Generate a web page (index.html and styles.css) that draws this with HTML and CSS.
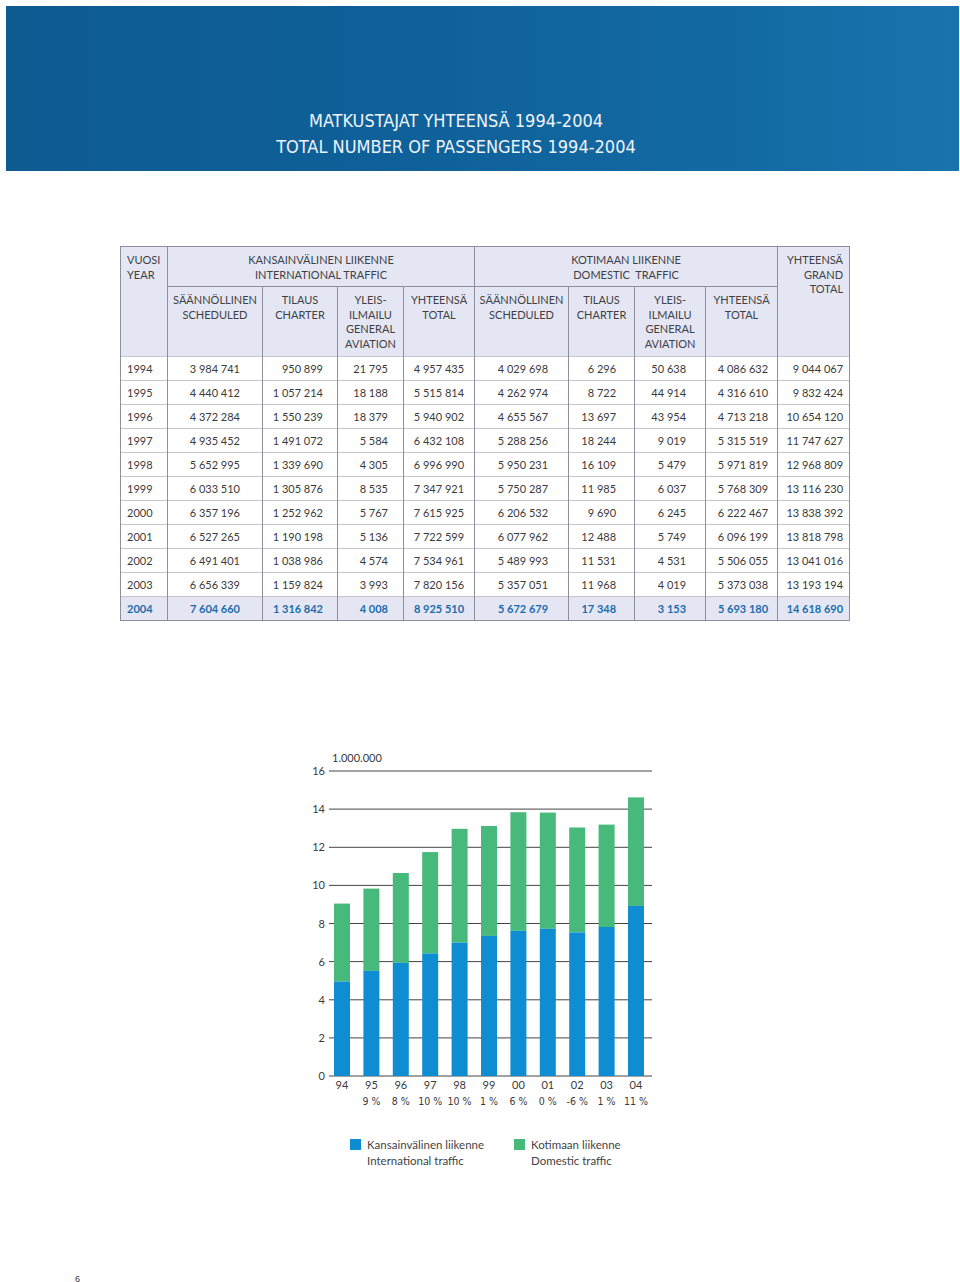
FILE: index.html
```html
<!DOCTYPE html>
<html lang="fi">
<head>
<meta charset="utf-8">
<title>Matkustajat yhteensä 1994-2004</title>
<link rel="stylesheet" href="styles.css">
</head>
<body>
<div class="page">
  <header class="banner">
    <h1 class="title">MATKUSTAJAT YHTEENSÄ 1994-2004<br>TOTAL NUMBER OF PASSENGERS 1994-2004</h1>
  </header>

  <table class="data">
    <colgroup>
      <col class="c-year"><col class="c-w95"><col class="c-w75"><col class="c-w66"><col class="c-w71">
      <col class="c-w94"><col class="c-w66"><col class="c-w71"><col class="c-w72"><col class="c-w72">
    </colgroup>
    <thead>
      <tr class="h1">
        <th rowspan="2" class="th-year">VUOSI<br>YEAR</th>
        <th colspan="4">KANSAINVÄLINEN LIIKENNE<br>INTERNATIONAL TRAFFIC</th>
        <th colspan="4">KOTIMAAN LIIKENNE<br>DOMESTIC&nbsp; TRAFFIC</th>
        <th rowspan="2" class="th-grand">YHTEENSÄ<br>GRAND<br>TOTAL</th>
      </tr>
      <tr class="h2">
        <th>SÄÄNNÖLLINEN<br>SCHEDULED</th>
        <th>TILAUS<br>CHARTER</th>
        <th>YLEIS-<br>ILMAILU<br>GENERAL<br>AVIATION</th>
        <th>YHTEENSÄ<br>TOTAL</th>
        <th>SÄÄNNÖLLINEN<br>SCHEDULED</th>
        <th>TILAUS<br>CHARTER</th>
        <th>YLEIS-<br>ILMAILU<br>GENERAL<br>AVIATION</th>
        <th>YHTEENSÄ<br>TOTAL</th>
      </tr>
    </thead>
    <tbody>
      <tr><td>1994</td><td>3 984 741</td><td>950 899</td><td>21 795</td><td>4 957 435</td><td>4 029 698</td><td>6 296</td><td>50 638</td><td>4 086 632</td><td>9 044 067</td></tr>
      <tr><td>1995</td><td>4 440 412</td><td>1 057 214</td><td>18 188</td><td>5 515 814</td><td>4 262 974</td><td>8 722</td><td>44 914</td><td>4 316 610</td><td>9 832 424</td></tr>
      <tr><td>1996</td><td>4 372 284</td><td>1 550 239</td><td>18 379</td><td>5 940 902</td><td>4 655 567</td><td>13 697</td><td>43 954</td><td>4 713 218</td><td>10 654 120</td></tr>
      <tr><td>1997</td><td>4 935 452</td><td>1 491 072</td><td>5 584</td><td>6 432 108</td><td>5 288 256</td><td>18 244</td><td>9 019</td><td>5 315 519</td><td>11 747 627</td></tr>
      <tr><td>1998</td><td>5 652 995</td><td>1 339 690</td><td>4 305</td><td>6 996 990</td><td>5 950 231</td><td>16 109</td><td>5 479</td><td>5 971 819</td><td>12 968 809</td></tr>
      <tr><td>1999</td><td>6 033 510</td><td>1 305 876</td><td>8 535</td><td>7 347 921</td><td>5 750 287</td><td>11 985</td><td>6 037</td><td>5 768 309</td><td>13 116 230</td></tr>
      <tr><td>2000</td><td>6 357 196</td><td>1 252 962</td><td>5 767</td><td>7 615 925</td><td>6 206 532</td><td>9 690</td><td>6 245</td><td>6 222 467</td><td>13 838 392</td></tr>
      <tr><td>2001</td><td>6 527 265</td><td>1 190 198</td><td>5 136</td><td>7 722 599</td><td>6 077 962</td><td>12 488</td><td>5 749</td><td>6 096 199</td><td>13 818 798</td></tr>
      <tr><td>2002</td><td>6 491 401</td><td>1 038 986</td><td>4 574</td><td>7 534 961</td><td>5 489 993</td><td>11 531</td><td>4 531</td><td>5 506 055</td><td>13 041 016</td></tr>
      <tr><td>2003</td><td>6 656 339</td><td>1 159 824</td><td>3 993</td><td>7 820 156</td><td>5 357 051</td><td>11 968</td><td>4 019</td><td>5 373 038</td><td>13 193 194</td></tr>
      <tr class="latest"><td>2004</td><td>7 604 660</td><td>1 316 842</td><td>4 008</td><td>8 925 510</td><td>5 672 679</td><td>17 348</td><td>3 153</td><td>5 693 180</td><td>14 618 690</td></tr>
    </tbody>
  </table>

  <figure class="chart">
    <svg class="chart-svg" width="360" height="370" viewBox="0 0 360 370" xmlns="http://www.w3.org/2000/svg">
      <g class="grid">
        <line x1="29" y1="26" x2="352" y2="26"/>
        <line x1="29" y1="64.1" x2="352" y2="64.1"/>
        <line x1="29" y1="102.3" x2="352" y2="102.3"/>
        <line x1="29" y1="140.4" x2="352" y2="140.4"/>
        <line x1="29" y1="178.5" x2="352" y2="178.5"/>
        <line x1="29" y1="216.6" x2="352" y2="216.6"/>
        <line x1="29" y1="254.8" x2="352" y2="254.8"/>
        <line x1="29" y1="292.9" x2="352" y2="292.9"/>
        <line x1="29" y1="331" x2="352" y2="331"/>
      </g>
      <g class="ylab">
        <text x="32" y="17" class="unit">1.000.000</text>
        <text x="25" y="30">16</text>
        <text x="25" y="68.1">14</text>
        <text x="25" y="106.3">12</text>
        <text x="25" y="144.4">10</text>
        <text x="25" y="182.5">8</text>
        <text x="25" y="220.6">6</text>
        <text x="25" y="258.8">4</text>
        <text x="25" y="296.9">2</text>
        <text x="25" y="335">0</text>
      </g>
      <g class="dom">
        <rect x="34" y="158.6" width="16" height="77.9"/>
        <rect x="63.4" y="143.6" width="16" height="82.3"/>
        <rect x="92.8" y="128" width="16" height="89.8"/>
        <rect x="122.2" y="107.1" width="16" height="101.3"/>
        <rect x="151.6" y="83.8" width="16" height="113.8"/>
        <rect x="181" y="81" width="16" height="109.9"/>
        <rect x="210.4" y="67.2" width="16" height="118.6"/>
        <rect x="239.8" y="67.6" width="16" height="116.2"/>
        <rect x="269.2" y="82.5" width="16" height="104.9"/>
        <rect x="298.6" y="79.6" width="16" height="102.4"/>
        <rect x="328" y="52.4" width="16" height="108.5"/>
      </g>
      <g class="intl">
        <rect x="34" y="236.5" width="16" height="94.5"/>
        <rect x="63.4" y="225.9" width="16" height="105.1"/>
        <rect x="92.8" y="217.8" width="16" height="113.2"/>
        <rect x="122.2" y="208.4" width="16" height="122.6"/>
        <rect x="151.6" y="197.6" width="16" height="133.4"/>
        <rect x="181" y="190.9" width="16" height="140.1"/>
        <rect x="210.4" y="185.8" width="16" height="145.2"/>
        <rect x="239.8" y="183.8" width="16" height="147.2"/>
        <rect x="269.2" y="187.4" width="16" height="143.6"/>
        <rect x="298.6" y="182" width="16" height="149"/>
        <rect x="328" y="160.9" width="16" height="170.1"/>
      </g>
      <g class="xlab">
        <text x="42" y="344">94</text>
        <text x="71.4" y="344">95</text>
        <text x="100.8" y="344">96</text>
        <text x="130.2" y="344">97</text>
        <text x="159.6" y="344">98</text>
        <text x="189" y="344">99</text>
        <text x="218.4" y="344">00</text>
        <text x="247.8" y="344">01</text>
        <text x="277.2" y="344">02</text>
        <text x="306.6" y="344">03</text>
        <text x="336" y="344">04</text>
      </g>
      <g class="pct">
        <text x="71.4" y="359.5">9 %</text>
        <text x="100.8" y="359.5">8 %</text>
        <text x="130.2" y="359.5">10 %</text>
        <text x="159.6" y="359.5">10 %</text>
        <text x="189" y="359.5">1 %</text>
        <text x="218.4" y="359.5">6 %</text>
        <text x="247.8" y="359.5">0 %</text>
        <text x="277.2" y="359.5">-6 %</text>
        <text x="306.6" y="359.5">1 %</text>
        <text x="336" y="359.5">11 %</text>
      </g>
    </svg>
  </figure>

  <div class="legend">
    <div class="legend-item">
      <span class="swatch swatch-intl"></span>
      <span class="legend-text">Kansainvälinen liikenne<br>International traffic</span>
    </div>
    <div class="legend-item">
      <span class="swatch swatch-dom"></span>
      <span class="legend-text">Kotimaan liikenne<br>Domestic traffic</span>
    </div>
  </div>

  <footer class="pageno">6</footer>
</div>
</body>
</html>
```

FILE: styles.css
```css
* { box-sizing: border-box; }

html, body {
  margin: 0;
  padding: 0;
  background: #ffffff;
}

.page {
  width: 960px;
  height: 1282px;
  padding-top: 6px;
  font-family: Lato, "Open Sans", sans-serif;
  color: #3a3a3a;
}

.banner {
  margin-left: 6px;
  width: 953px;
  height: 165px;
  padding: 102px 53px 0 0;
  background: linear-gradient(90deg, #0e5b92 0%, #0f6199 45%, #136aa3 75%, #1973ac 100%);
}

.title {
  margin: 0;
  text-align: center;
  font-family: "DejaVu Sans Condensed", "DejaVu Sans", sans-serif;
  font-weight: normal;
  font-size: 18px;
  line-height: 26px;
  color: #eef3f9;
}

/* table */
.data {
  margin: 75px 0 0 120px;
  width: 729px;
  border-collapse: collapse;
  table-layout: fixed;
  font-size: 11px;
  border: 1px solid #8e8e9e;
}

.c-year { width: 47px; }
.c-w95 { width: 95px; }
.c-w75 { width: 75px; }
.c-w66 { width: 66px; }
.c-w71 { width: 71px; }
.c-w94 { width: 94px; }
.c-w72 { width: 72px; }

.data th {
  background: #e4e7f3;
  font-weight: normal;
  color: #3f3f46;
  line-height: 14.5px;
  vertical-align: top;
  text-align: center;
  border-left: 1px solid #8e8e9e;
  border-right: 1px solid #8e8e9e;
  padding: 0 2px;
}

.data .h1 { height: 40px; }
.data .h1 th { padding-top: 6px; border-bottom: 1px solid #8e8e9e; }
.data .h1 .th-year, .data .h1 .th-grand { border-bottom: none; }
.data .th-year { text-align: left; padding-left: 6px; }
.data .th-grand { text-align: right; padding-right: 6px; }

.data .h2 { height: 70px; }
.data .h2 th { padding-top: 6px; }

.data thead { border-bottom: 1px solid #8e8e9e; }

.data tbody tr { height: 24px; }
.data td {
  padding: 0;
  text-align: right;
  white-space: nowrap;
  vertical-align: middle;
  border-left: 1px solid #8e8e9e;
  border-right: 1px solid #8e8e9e;
  border-top: 1px solid #c4c4d0;
  line-height: 14px;
}

.data td:nth-child(1) { text-align: left; padding-left: 6px; }
.data td:nth-child(2) { padding-right: 22px; }
.data td:nth-child(3) { padding-right: 14px; }
.data td:nth-child(4) { padding-right: 15px; }
.data td:nth-child(5) { padding-right: 10px; }
.data td:nth-child(6) { padding-right: 20px; }
.data td:nth-child(7) { padding-right: 18px; }
.data td:nth-child(8) { padding-right: 19px; }
.data td:nth-child(9) { padding-right: 9px; }
.data td:nth-child(10) { padding-right: 6px; }

.data tr.latest td {
  background: #e4e7f3;
  color: #1c6bab;
  font-weight: bold;
}

/* chart */
.chart {
  margin: 124px 0 0 300px;
  width: 360px;
  height: 370px;
}

.chart-svg { display: block; }

.grid line { stroke: #444; stroke-width: 1; }
.intl rect { fill: #0f8dd3; }
.dom rect { fill: #47b97b; }

.ylab text {
  font-family: Lato, sans-serif;
  font-size: 11px;
  fill: #3a3a3a;
  text-anchor: end;
}
.ylab text.unit { text-anchor: start; }

.xlab text {
  font-family: Lato, sans-serif;
  font-size: 11px;
  fill: #3a3a3a;
  text-anchor: middle;
}

.pct text {
  font-family: "DejaVu Sans Condensed", sans-serif;
  font-size: 10.5px;
  fill: #3a3a3a;
  text-anchor: middle;
}

/* legend */
.legend {
  margin: 22px 0 0 350px;
  display: flex;
}

.legend-item {
  display: flex;
  align-items: flex-start;
  gap: 6px;
  width: 164px;
}

.swatch {
  width: 11px;
  height: 11px;
  margin-top: 2px;
  flex: none;
}
.swatch-intl { background: #0f8dd3; }
.swatch-dom { background: #47b97b; }

.legend-text {
  font-size: 11.5px;
  line-height: 16px;
  color: #444;
}

.pageno {
  margin: 104px 0 0 75px;
  font-family: "Liberation Sans", sans-serif;
  font-size: 9px;
  line-height: 12px;
  color: #333;
}
```
